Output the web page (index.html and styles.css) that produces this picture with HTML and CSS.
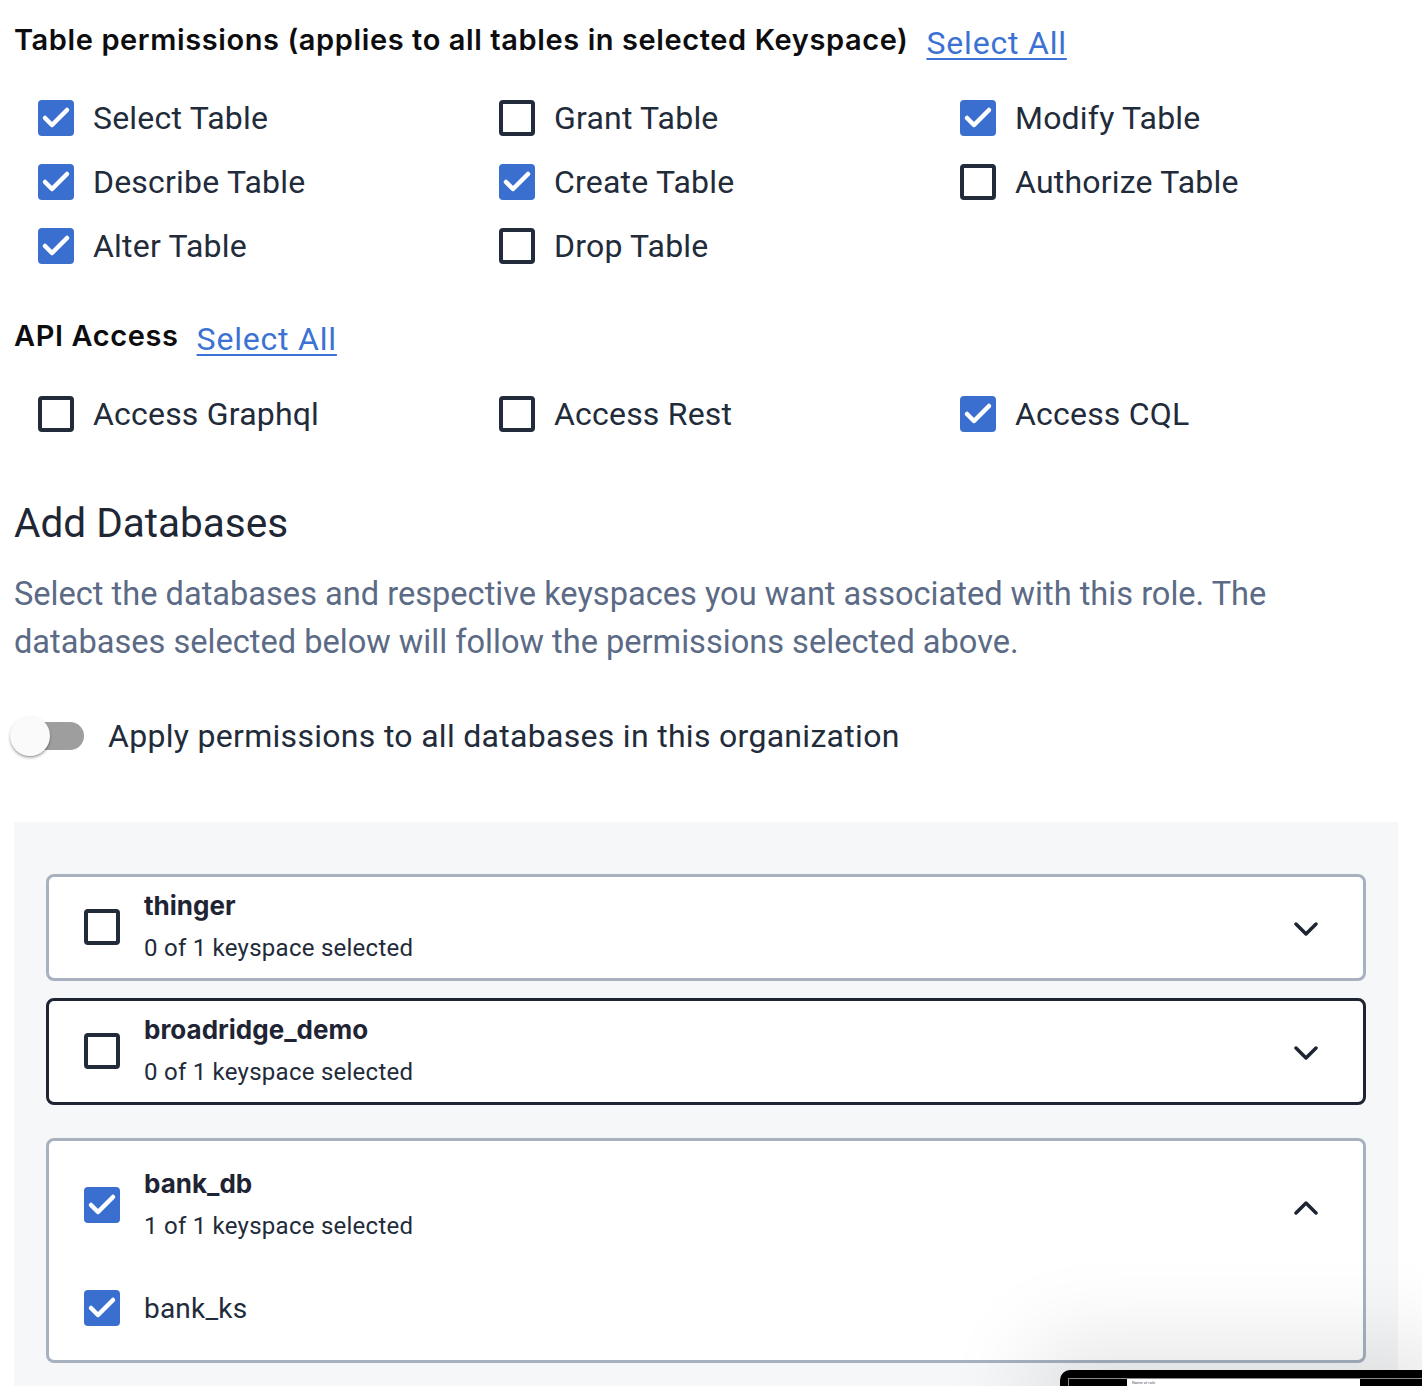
FILE: index.html
```html
<!DOCTYPE html>
<html lang="en">
<head>
<meta charset="utf-8">
<title>Role permissions</title>
<link rel="stylesheet" href="styles.css">
</head>
<body>
<main class="page">
  <section class="perm">
    <div class="perm-head">
      <h2 class="perm-title">Table permissions (applies to all tables in selected Keyspace)</h2>
      <a class="select-all" href="#">Select All</a>
    </div>
    <div class="perm-grid">
      <label class="check-item"><span class="cb cb--on"><svg viewBox="0 0 36 36"><polyline points="7,18 14,25 29,10"/></svg></span>Select Table</label>
      <label class="check-item"><span class="cb"></span>Grant Table</label>
      <label class="check-item"><span class="cb cb--on"><svg viewBox="0 0 36 36"><polyline points="7,18 14,25 29,10"/></svg></span>Modify Table</label>
      <label class="check-item"><span class="cb cb--on"><svg viewBox="0 0 36 36"><polyline points="7,18 14,25 29,10"/></svg></span>Describe Table</label>
      <label class="check-item"><span class="cb cb--on"><svg viewBox="0 0 36 36"><polyline points="7,18 14,25 29,10"/></svg></span>Create Table</label>
      <label class="check-item"><span class="cb"></span>Authorize Table</label>
      <label class="check-item"><span class="cb cb--on"><svg viewBox="0 0 36 36"><polyline points="7,18 14,25 29,10"/></svg></span>Alter Table</label>
      <label class="check-item"><span class="cb"></span>Drop Table</label>
    </div>
  </section>

  <section class="perm perm--api">
    <div class="perm-head">
      <h2 class="perm-title">API Access</h2>
      <a class="select-all" href="#">Select All</a>
    </div>
    <div class="perm-grid">
      <label class="check-item"><span class="cb"></span>Access Graphql</label>
      <label class="check-item"><span class="cb"></span>Access Rest</label>
      <label class="check-item"><span class="cb cb--on"><svg viewBox="0 0 36 36"><polyline points="7,18 14,25 29,10"/></svg></span>Access CQL</label>
    </div>
  </section>

  <section class="dbs">
    <h2 class="dbs-title">Add Databases</h2>
    <p class="dbs-desc">Select the databases and respective keyspaces you want associated with this role. The databases selected below will follow the permissions selected above.</p>
    <div class="toggle-row">
      <span class="switch"><span class="switch-track"></span><span class="switch-knob"></span></span>
      <span class="toggle-label">Apply permissions to all databases in this organization</span>
    </div>

    <div class="db-panel">
      <div class="db-card">
        <div class="db-head">
          <span class="cb"></span>
          <div class="db-text">
            <div class="db-name">thinger</div>
            <div class="db-sub">0 of 1 keyspace selected</div>
          </div>
          <svg class="chev" viewBox="0 0 24 16"><polyline points="2,3 12,13 22,3"/></svg>
        </div>
      </div>
      <div class="db-card db-card--focus">
        <div class="db-head">
          <span class="cb"></span>
          <div class="db-text">
            <div class="db-name">broadridge_demo</div>
            <div class="db-sub">0 of 1 keyspace selected</div>
          </div>
          <svg class="chev" viewBox="0 0 24 16"><polyline points="2,3 12,13 22,3"/></svg>
        </div>
      </div>
      <div class="db-card db-card--open">
        <div class="db-head">
          <span class="cb cb--on"><svg viewBox="0 0 36 36"><polyline points="7,18 14,25 29,10"/></svg></span>
          <div class="db-text">
            <div class="db-name">bank_db</div>
            <div class="db-sub">1 of 1 keyspace selected</div>
          </div>
          <svg class="chev chev--up" viewBox="0 0 24 16"><polyline points="2,13 12,3 22,13"/></svg>
        </div>
        <div class="ks-row">
          <span class="cb cb--on"><svg viewBox="0 0 36 36"><polyline points="7,18 14,25 29,10"/></svg></span>
          <span class="ks-name">bank_ks</span>
        </div>
      </div>
    </div>
  </section>

  <div class="thumb">
    <div class="thumb-inner">
      <div class="thumb-side"></div>
      <div class="thumb-main"><span class="thumb-text">Name of role</span></div>
      <div class="thumb-side"></div>
    </div>
  </div>
</main>
</body>
</html>
```

FILE: styles.css
```css
html {
  overflow: hidden;
}

body {
  margin: 0;
  background: #ffffff;
  font-family: Roboto, "Liberation Sans", sans-serif;
  color: #222b3a;
}

.page {
  position: relative;
  padding: 20px 24px 0 14px;
}

.perm-head {
  display: flex;
  align-items: center;
  gap: 18px;
  height: 40px;
}

.perm-title {
  margin: 0;
  font-family: Inter, Roboto, sans-serif;
  font-size: 29px;
  font-weight: 600;
  line-height: 40px;
  letter-spacing: 0.6px;
  color: #0d0d0f;
}

.select-all {
  margin-top: 6px;
  font-size: 32px;
  line-height: 40px;
  color: #3b72d3;
  letter-spacing: 0.8px;
  text-decoration: underline;
  text-decoration-thickness: 2px;
  text-underline-offset: 4px;
}

.perm-grid {
  display: grid;
  grid-template-columns: repeat(3, 461px);
  grid-auto-rows: 64px;
  margin: 26px 0 0 24px;
}

.check-item {
  display: flex;
  align-items: center;
  gap: 19px;
  font-size: 32px;
  line-height: 64px;
  color: #222b3a;
  letter-spacing: 0.2px;
}

.cb {
  flex: none;
  box-sizing: border-box;
  width: 36px;
  height: 36px;
  border: 4px solid #222b3a;
  border-radius: 4px;
  background: #ffffff;
}

.cb--on {
  border: none;
  background: #3a6fd0;
}

.cb svg {
  display: block;
  width: 36px;
  height: 36px;
  fill: none;
  stroke: #ffffff;
  stroke-width: 4.5;
  stroke-linecap: round;
  stroke-linejoin: round;
}

.perm--api {
  margin-top: 38px;
}

.dbs-title {
  margin: 53px 0 0;
  font-size: 40.5px;
  font-weight: 400;
  line-height: 48px;
  color: #1f2735;
}

.dbs-desc {
  margin: 23px 0 0;
  font-size: 32.6px;
  line-height: 48px;
  color: #5b6a85;
}

.toggle-row {
  display: flex;
  align-items: center;
  gap: 24px;
  height: 48px;
  margin: 46px 0 0 -4px;
}

.switch {
  position: relative;
  flex: none;
  width: 74px;
  height: 40px;
}

.switch-track {
  position: absolute;
  left: 4px;
  top: 6px;
  width: 70px;
  height: 28px;
  border-radius: 14px;
  background: #9e9e9e;
}

.switch-knob {
  position: absolute;
  left: 0;
  top: 0;
  width: 40px;
  height: 40px;
  border-radius: 50%;
  background: #fafafa;
  box-shadow: 0 2px 3px rgba(0, 0, 0, 0.28), 0 1px 1px rgba(0, 0, 0, 0.14);
}

.toggle-label {
  font-size: 32px;
  color: #222b3a;
  letter-spacing: 0.3px;
}

.db-panel {
  margin-top: 62px;
  padding: 52px 32px 40px;
  background: #f5f7f9;
}

.db-card {
  background: #ffffff;
  border: 3px solid #a7b1c0;
  border-radius: 8px;
  padding: 10px 45px 11px 35px;
}

.db-card + .db-card {
  margin-top: 17px;
}

.db-card--focus {
  border-color: #1e2433;
}

.db-card.db-card--open {
  margin-top: 33px;
  padding: 24px 45px 28px 35px;
}

.db-head {
  display: flex;
  align-items: center;
  gap: 24px;
}

.db-text {
  flex: 1;
}

.db-name {
  font-family: Inter, Roboto, sans-serif;
  font-size: 26px;
  font-weight: 700;
  line-height: 38px;
  color: #1e2433;
}

.db-sub {
  margin-top: 4px;
  font-size: 24px;
  line-height: 38px;
  color: #222b3a;
  letter-spacing: 0.25px;
}

.chev {
  flex: none;
  width: 24px;
  height: 16px;
  margin-top: 4px;
  fill: none;
  stroke: #1e2433;
  stroke-width: 3.5;
  stroke-linecap: round;
  stroke-linejoin: round;
}

.chev--up {
  margin-top: 6px;
}

.ks-row {
  display: flex;
  align-items: center;
  gap: 24px;
  height: 48px;
  margin-top: 39px;
}

.ks-name {
  font-size: 28px;
  color: #222b3a;
  letter-spacing: 0.2px;
}

.thumb {
  position: absolute;
  left: 1060px;
  top: 1370px;
  width: 372px;
  height: 60px;
  box-sizing: border-box;
  padding: 8px 0 0 8px;
  background: #000000;
  border-radius: 10px;
  box-shadow: 0 0 90px 30px rgba(0, 0, 0, 0.10);
}

.thumb-inner {
  display: flex;
  height: 100%;
  border-top: 1px solid #8a8a8a;
  border-left: 1px solid #8a8a8a;
}

.thumb-side {
  flex: none;
  width: 58px;
  background: #000000;
}

.thumb-main {
  flex: none;
  width: 228px;
  background: #ffffff;
  padding: 1px 0 0 5px;
}

.thumb-text {
  display: block;
  font-size: 4px;
  line-height: 5px;
  color: #555c6a;
}
```
